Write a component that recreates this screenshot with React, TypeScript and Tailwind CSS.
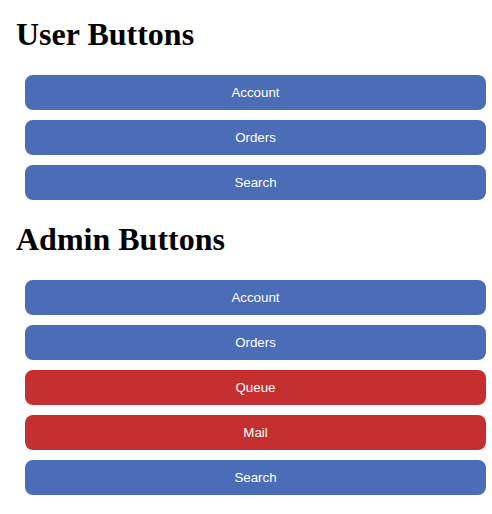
const userButtons = [
  { label: "Account", danger: false },
  { label: "Orders", danger: false },
  { label: "Search", danger: false },
];

const adminButtons = [
  { label: "Account", danger: false },
  { label: "Orders", danger: false },
  { label: "Queue", danger: true },
  { label: "Mail", danger: true },
  { label: "Search", danger: false },
];

type Btn = { label: string; danger: boolean };

const ButtonGroup = ({ title, buttons }: { title: string; buttons: Btn[] }) => {
  return (
    <section className="flex flex-col">
      <h1 className="font-['Liberation_Serif',serif] font-bold text-[32px] leading-[35.4px] text-black pl-4 mt-[17px] mb-[17.6px]">
        {title}
      </h1>
      <div className="flex flex-col gap-[10px] pl-[25px] pr-[6px] my-[5px]">
        {buttons.map((b, i) => (
          <button
            key={i}
            className={`h-[35px] w-full rounded-lg text-white text-[13.33px] font-['Liberation_Sans',Arial,sans-serif] ${
              b.danger ? "bg-[#c62f2f]" : "bg-[#4b6cb7]"
            }`}
          >
            {b.label}
          </button>
        ))}
      </div>
    </section>
  );
};

export default function App() {
  return (
    <div className="w-[492px] bg-white">
      <ButtonGroup title="User Buttons" buttons={userButtons} />
      <ButtonGroup title="Admin Buttons" buttons={adminButtons} />
    </div>
  );
}
